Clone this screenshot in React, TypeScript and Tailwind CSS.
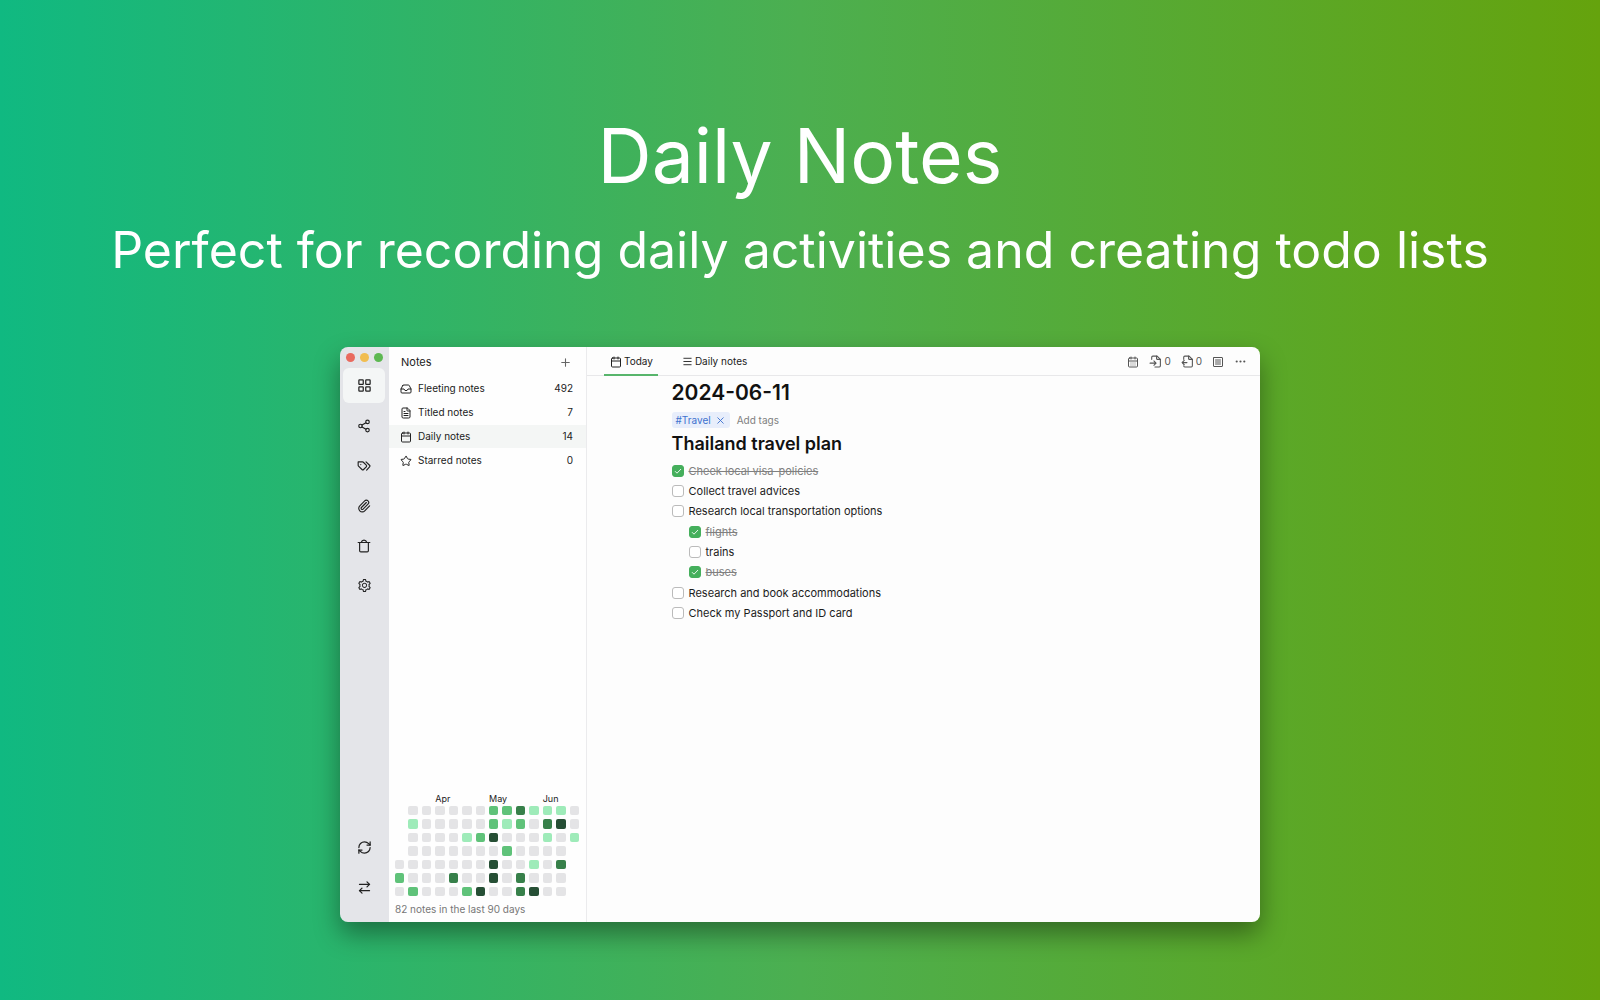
import { JSX, ReactNode, useState } from 'react'
import { clsx } from 'clsx'
import {
  ArrowRightLeft,
  Calendar,
  CalendarDays,
  Ellipsis,
  FileText,
  Inbox,
  LayoutGrid,
  Menu,
  Paperclip,
  Plus,
  RefreshCw,
  Share2,
  Star,
  X,
} from 'lucide-react'
import { AiOutlineSetting } from 'react-icons/ai'

const heatColors = ['bg-[#e4e4e6]', 'bg-[#9eebb9]', 'bg-[#5fc279]', 'bg-[#37804a]', 'bg-[#264f35]']

// one string per weekday, one char per week, '.' is out of range
const heatmap = [
  '.0000002231110',
  '.1000002120340',
  '.0000124000101',
  '.000000020000.',
  '0000000400103.',
  '2000300403000.',
  '0200024003400.',
]

interface Todo {
  id: string
  text: string
  done: boolean
  children?: Todo[]
}

const initialTodos: Todo[] = [
  { id: 'visa', text: 'Cheek local visa-policies', done: true },
  { id: 'advices', text: 'Collect travel advices', done: false },
  {
    id: 'transport',
    text: 'Research local transportation options',
    done: false,
    children: [
      { id: 'flights', text: 'flights', done: true },
      { id: 'trains', text: 'trains', done: false },
      { id: 'buses', text: 'buses', done: true },
    ],
  },
  { id: 'book', text: 'Research and book accommodations', done: false },
  { id: 'passport', text: 'Check my Passport and ID card', done: false },
]

function toggleTodo(todos: Todo[], id: string): Todo[] {
  return todos.map((todo) => ({
    ...todo,
    done: todo.id === id ? !todo.done : todo.done,
    children: todo.children && toggleTodo(todo.children, id),
  }))
}

function Svg({ size, children }: { size: number; children: ReactNode }): JSX.Element {
  return (
    <svg
      width={size}
      height={size}
      viewBox="0 0 24 24"
      fill="none"
      stroke="currentColor"
      strokeWidth={2}
      strokeLinecap="round"
      strokeLinejoin="round"
    >
      {children}
    </svg>
  )
}

function TagsIcon(): JSX.Element {
  return (
    <Svg size={14}>
      <path d="M2 5h7.5a2 2 0 0 1 1.4.6l5 5a2 2 0 0 1 0 2.8l-4.6 4.6a2 2 0 0 1-2.8 0l-5.900-5.900A2 2 0 0 1 2 10.700z" />
      <path d="M15.500 5l6 5.700a2 2 0 0 1 0 2.800L16.500 19" />
      <path d="M6.500 9.500h.01" />
    </Svg>
  )
}

function TrashIcon(): JSX.Element {
  return (
    <Svg size={14}>
      <path d="M2 6h20" />
      <path d="M4.500 6V20a2 2 0 0 0 2 2h11a2 2 0 0 0 2-2V6" />
      <path d="M7.500 5.500c.5-2.500 2-3.500 4.500-3.500s4 1 4.500 3.500" />
    </Svg>
  )
}

function LinkInIcon(): JSX.Element {
  return (
    <Svg size={13}>
      <path d="M5 8V4a2 2 0 0 1 2-2h8l6 6v12a2 2 0 0 1-2 2h-8" />
      <path d="M14 2v5a1 1 0 0 0 1 1h6" />
      <path d="M2 15h11M9 11l4 4-4 4" />
    </Svg>
  )
}

function LinkOutIcon(): JSX.Element {
  return (
    <Svg size={13}>
      <path d="M5 8V4a2 2 0 0 1 2-2h8l6 6v12a2 2 0 0 1-2 2H7a2 2 0 0 1-2-2" />
      <path d="M14 2v5a1 1 0 0 0 1 1h6" />
      <path d="M2 14h9M6 10l-4 4 4 4" />
    </Svg>
  )
}

function ListIcon(): JSX.Element {
  return (
    <Svg size={12}>
      <rect x="3" y="3" width="18" height="18" rx="1" />
      <path d="M7 8h10M7 12h10M7 16h10" />
    </Svg>
  )
}

function RailButton({ label, active, children }: { label: string; active?: boolean; children: ReactNode }): JSX.Element {
  return (
    <button
      aria-label={label}
      className={clsx(
        'h-[35px] rounded-md flex items-center justify-center text-[#222] hover:cursor-pointer',
        active && 'bg-[#f4f6f6]'
      )}
    >
      {children}
    </button>
  )
}

function NoteLink({
  icon,
  label,
  count,
  active,
}: {
  icon: ReactNode
  label: string
  count: number
  active?: boolean
}): JSX.Element {
  return (
    <li>
      <a
        href="#"
        className={clsx('h-[23px] pl-[11px] pr-[13px] flex items-center gap-1.5 text-[10px]', active && 'bg-[#f4f6f5]')}
      >
        {icon}
        <span className="flex-1">{label}</span>
        <span>{count}</span>
      </a>
    </li>
  )
}

function TodoItem({ todo, onToggle }: { todo: Todo; onToggle: (id: string) => void }): JSX.Element {
  return (
    <li>
      <div className="h-5 flex items-center gap-[5px]">
        <span className="relative flex">
          <input
            id={todo.id}
            type="checkbox"
            checked={todo.done}
            onChange={() => onToggle(todo.id)}
            className="appearance-none w-3 h-3 rounded-[3px] border border-[#bbb] bg-white checked:bg-[#45af5c] checked:border-[#45af5c]"
          />
          {todo.done && (
            <svg className="absolute inset-0 pointer-events-none" width="12" height="12" viewBox="0 0 12 12" fill="none">
              <path d="M3 6.200l2 2L9 4" stroke="#e6f7ea" strokeWidth="1" />
            </svg>
          )}
        </span>
        <label htmlFor={todo.id} className={clsx(todo.done ? 'text-[#808080] line-through' : 'text-[#1c1c1c]')}>
          {todo.text}
        </label>
      </div>
      {todo.children && (
        <ul className="pl-[17px] py-px">
          {todo.children.map((child) => (
            <TodoItem key={child.id} todo={child} onToggle={onToggle} />
          ))}
        </ul>
      )}
    </li>
  )
}

function Rail(): JSX.Element {
  return (
    <nav className="w-[49px] shrink-0 bg-[#e4e5e9] pl-[3px] pr-1 pt-1.5 pb-[17px] flex flex-col gap-[5px]">
      <div className="pl-[3px] pr-0.5 mb-px flex justify-between">
        <button aria-label="Close" className="w-[9px] h-[9px] rounded-full bg-[#e96a5f]" />
        <button aria-label="Minimize" className="w-[9px] h-[9px] rounded-full bg-[#f1bd50]" />
        <button aria-label="Zoom" className="w-[9px] h-[9px] rounded-full bg-[#5db852]" />
      </div>
      <RailButton label="Notes" active>
        <LayoutGrid size={15} />
      </RailButton>
      <RailButton label="Graph">
        <Share2 size={14} />
      </RailButton>
      <RailButton label="Tags">
        <TagsIcon />
      </RailButton>
      <RailButton label="Files">
        <Paperclip size={14} />
      </RailButton>
      <RailButton label="Trash">
        <TrashIcon />
      </RailButton>
      <RailButton label="Settings">
        <AiOutlineSetting size={15} />
      </RailButton>
      <div className="flex-1" />
      <RailButton label="Sync">
        <RefreshCw size={15} />
      </RailButton>
      <RailButton label="Import and export">
        <ArrowRightLeft size={15} />
      </RailButton>
    </nav>
  )
}

function Heatmap(): JSX.Element {
  return (
    <section className="pl-1.5 pr-[7px] pb-[5px] text-[#222]">
      <div className="grid grid-cols-14 gap-x-1 text-[9px] leading-[14px]">
        <span className="col-start-4 w-0">Apr</span>
        <span className="col-start-8 w-0">May</span>
        <span className="col-start-12 w-0">Jun</span>
      </div>
      <div className="grid grid-cols-14 gap-1">
        {heatmap
          .join('')
          .split('')
          .map((level, i) => (
            <div key={i} className={clsx('aspect-square rounded-[2px]', level !== '.' && heatColors[Number(level)])} />
          ))}
      </div>
      <p className="mt-1.5 text-[10px] leading-[15px] text-[#777]">82 notes in the last 90 days</p>
    </section>
  )
}

function Sidebar(): JSX.Element {
  return (
    <aside className="w-[198px] shrink-0 bg-[#fefefe] border-r border-[#ebebed] flex flex-col text-[#222]">
      <div className="h-[30px] pl-3 pr-3.5 flex items-center justify-between">
        <h2 className="text-[11px]">Notes</h2>
        <button aria-label="New note" className="text-[#666] hover:cursor-pointer">
          <Plus size={13} />
        </button>
      </div>
      <ul className="flex flex-col gap-px">
        <NoteLink icon={<Inbox size={12} />} label="Fleeting notes" count={492} />
        <NoteLink icon={<FileText size={12} />} label="Titled notes" count={7} />
        <NoteLink icon={<Calendar size={12} />} label="Daily notes" count={14} active />
        <NoteLink icon={<Star size={12} />} label="Starred notes" count={0} />
      </ul>
      <div className="flex-1" />
      <Heatmap />
    </aside>
  )
}

function Editor(): JSX.Element {
  const [todos, setTodos] = useState(initialTodos)
  const [tab, setTab] = useState('today')

  function handleToggle(id: string): void {
    setTodos((value) => toggleTodo(value, id))
  }

  function tabClass(name: string): string {
    return clsx(
      'pt-0.5 pl-1.5 pr-[5px] flex items-center gap-0.5 border-b-2 -mb-px hover:cursor-pointer',
      tab === name ? 'border-[#58b56c]' : 'border-transparent'
    )
  }

  return (
    <main className="flex-1 bg-[#fdfdfd]">
      <header className="h-[29px] pl-[17px] pr-[13px] border-b border-[#e8e8ea] flex justify-between text-[10px] text-[#222]">
        <div className="flex gap-[18px]">
          <button className={tabClass('today')} onClick={() => setTab('today')}>
            <Calendar size={12} />
            Today
          </button>
          <button className={tabClass('daily')} onClick={() => setTab('daily')}>
            <Menu size={11} />
            Daily notes
          </button>
        </div>
        <div className="pt-px flex items-center gap-2.5 text-[#555]">
          <button aria-label="Calendar">
            <CalendarDays size={12} />
          </button>
          <button aria-label="Links" className="flex items-center gap-0.5">
            <LinkInIcon />0
          </button>
          <button aria-label="Backlinks" className="flex items-center gap-0.5">
            <LinkOutIcon />0
          </button>
          <button aria-label="Outline">
            <ListIcon />
          </button>
          <button aria-label="More">
            <Ellipsis size={13} />
          </button>
        </div>
      </header>
      <article className="mx-auto max-w-[504px] pt-[5px]">
        <h2 className="text-[21px] leading-6 font-semibold text-[#111]">2024-06-11</h2>
        <div className="mt-[7px] flex items-center gap-[7px] text-[10px] leading-4">
          <span className="h-4 px-1 rounded-[3px] bg-[#e8eefb] text-[#3e72cf] flex items-center gap-1">
            #Travel
            <button aria-label="Remove tag">
              <X size={11} />
            </button>
          </span>
          <button className="text-[#808080]">Add tags</button>
        </div>
        <h3 className="mt-1 text-lg leading-6 font-semibold text-[#111]">Thailand travel plan</h3>
        <ul className="mt-[5px] text-[11px]">
          {todos.map((todo) => (
            <TodoItem key={todo.id} todo={todo} onToggle={handleToggle} />
          ))}
        </ul>
      </article>
    </main>
  )
}

function App(): JSX.Element {
  return (
    <div className="min-h-screen px-4 pb-[78px] flex flex-col items-center bg-[linear-gradient(to_right,#10b981,#4caf50,#65a30d)] font-['Inter',sans-serif]">
      <h1 className="mt-[111px] text-center text-white text-[75px] leading-[90px]">Daily Notes</h1>
      <p className="mt-[19px] text-center text-white text-[50px] leading-[60px]">
        Perfect for recording daily activities and creating todo lists
      </p>
      <div className="mt-[67px] w-full max-w-[920px] flex-1 flex rounded-lg overflow-hidden shadow-[0_12px_26px_rgba(0,0,0,0.38)]">
        <Rail />
        <Sidebar />
        <Editor />
      </div>
    </div>
  )
}

export default App
